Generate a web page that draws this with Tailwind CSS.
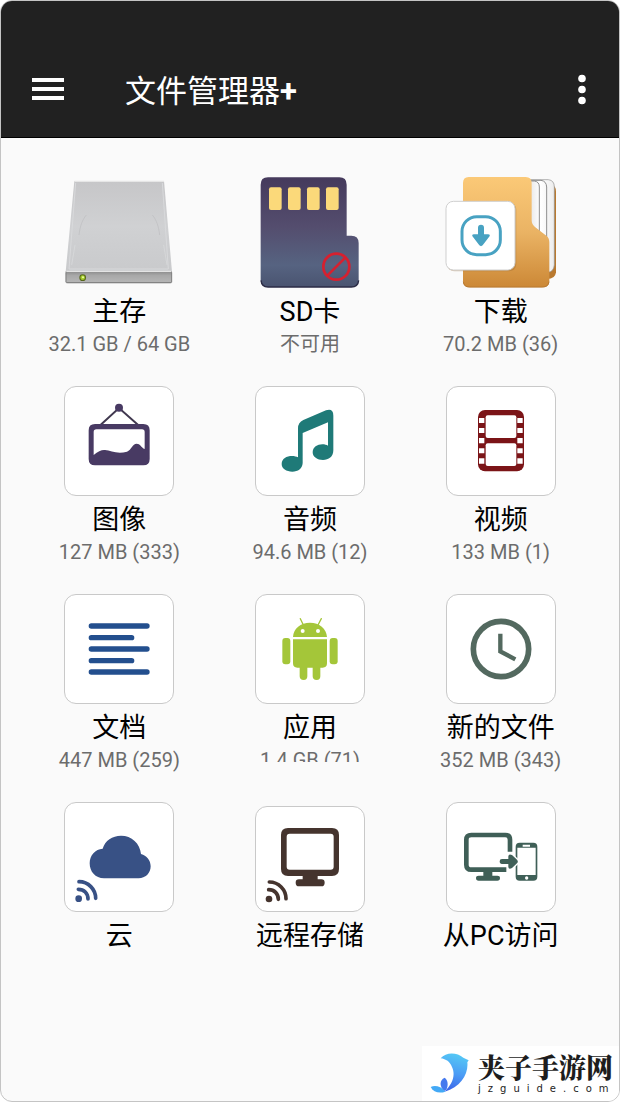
<!DOCTYPE html>
<html lang="zh-CN">
  <head>
    <meta charset="UTF-8" />
    <meta name="viewport" content="width=device-width, initial-scale=1.0" />
    <script src="https://cdn.jsdelivr.net/npm/@tailwindcss/browser@4"></script>
    <title>文件管理器+</title>
  </head>
  <body class="bg-white font-[Roboto,'Noto_Sans_CJK_SC',sans-serif]">
    <div class="relative flex min-h-screen flex-col overflow-hidden rounded-xl border border-[#c4c4c4] bg-[#fafafa]">
      <header class="-mx-px -mt-px flex items-center border-b border-black bg-[#212121] px-8 pt-11 pb-[3px] text-white">
        <button type="button" aria-label="菜单" class="flex h-[90px] items-center">
          <svg class="h-6 w-8" viewBox="0 0 32 24" fill="currentColor">
            <path d="M0 1h32v4H0zM0 10h32v4H0zM0 19h32v4H0z" />
          </svg>
        </button>
        <h1 class="mt-1.5 ml-[61px] text-[31px] leading-10 font-normal">文件管理器<span class="font-bold">+</span></h1>
        <button type="button" aria-label="更多" class="ml-auto flex h-[90px] items-center">
          <svg class="h-8 w-3" viewBox="0 0 12 32" fill="currentColor">
            <circle cx="6" cy="5.5" r="3.8" />
            <circle cx="6" cy="16.5" r="3.8" />
            <circle cx="6" cy="27.5" r="3.8" />
          </svg>
        </button>
      </header>

      <main class="grid grid-cols-3 gap-y-[29px] px-[23px] pt-10">
        <!-- main storage -->
        <button type="button" class="flex flex-col items-center">
          <svg class="size-[110px] overflow-visible" viewBox="73 39 330 330">
            <defs>
              <linearGradient id="diskTop" x1="0" y1="0" x2="0" y2="1">
                <stop offset="0" stop-color="#c6c6c8" />
                <stop offset="0.5" stop-color="#d0d1d3" />
                <stop offset="1" stop-color="#c9cacc" />
              </linearGradient>
              <linearGradient id="diskFront" x1="0" y1="0" x2="0" y2="1">
                <stop offset="0" stop-color="#8c8c8c" />
                <stop offset="0.35" stop-color="#a8a8a8" />
                <stop offset="1" stop-color="#b8b8b8" />
              </linearGradient>
            </defs>
            <path d="M104 48H373L397 320H78Z" fill="url(#diskTop)" />
            <path d="M104 49H373" stroke="#e6e6e6" stroke-width="4" />
            <path d="M108 54L88 312H386L368 54" fill="none" stroke="#d8d9db" stroke-width="3" />
            <path d="M118 210C121 184 128 164 140 150M360 210C357 184 350 164 338 150" fill="none" stroke="#bcbdc0" stroke-width="2" />
            <path d="M96 300L106 240M382 300L372 240" fill="none" stroke="#dbdcde" stroke-width="2" />
            <path d="M78 319H397V350Q397 355 391 355H84Q78 355 78 350Z" fill="url(#diskFront)" />
            <path d="M80 319H395" stroke="#e4e4e4" stroke-width="4" />
            <path d="M80 353H395" stroke="#7a7a7a" stroke-width="3" />
            <path d="M79 322V352M396 322V352" stroke="#808080" stroke-width="3" />
            <circle cx="129" cy="338" r="10" fill="#55651a" />
            <circle cx="129" cy="338" r="7" fill="#a5cc2e" />
            <circle cx="130" cy="337" r="3" fill="#eeffa0" />
          </svg>
          <span class="mt-[5px] text-[27px] leading-[38px] text-black">主存</span>
          <span class="text-[20px] leading-[26px] text-[#6c6c6c]">32.1 GB / 64 GB</span>
        </button>

        <!-- sd card -->
        <button type="button" class="flex flex-col items-center">
          <svg class="size-[110px] overflow-visible" viewBox="75 39 330 330">
            <defs>
              <linearGradient id="sdBody" x1="0" y1="0" x2="0" y2="1">
                <stop offset="0" stop-color="#453a5c" />
                <stop offset="0.45" stop-color="#544d6e" />
                <stop offset="0.8" stop-color="#566381" />
                <stop offset="1" stop-color="#4a5470" />
              </linearGradient>
            </defs>
            <path d="M114 37H328Q350 37 350 59V212H364Q386 212 386 234V344Q386 366 364 366H114Q92 366 92 344V59Q92 37 114 37Z" fill="url(#sdBody)" />
            <path d="M93 346Q95 366 114 366H364Q384 366 386 346" fill="none" stroke="#2b2b45" stroke-width="4" />
            <g fill="#fbd97a">
              <rect x="117" y="67" width="38" height="68" rx="6" />
              <rect x="174" y="67" width="38" height="68" rx="6" />
              <rect x="231" y="67" width="38" height="68" rx="6" />
              <rect x="288" y="67" width="38" height="68" rx="6" />
            </g>
            <g fill="none" stroke="#d6202f" stroke-width="8">
              <circle cx="319" cy="305" r="39" />
              <path d="M292 332L346 278" />
            </g>
          </svg>
          <span class="mt-[5px] text-[27px] leading-[38px] text-black">SD卡</span>
          <span class="text-[20px] leading-[26px] text-[#6c6c6c]">不可用</span>
        </button>

        <!-- downloads -->
        <button type="button" class="flex flex-col items-center">
          <svg class="size-[110px] overflow-visible" viewBox="77 39 330 330">
            <defs>
              <linearGradient id="folder" x1="0" y1="0" x2="0" y2="1">
                <stop offset="0" stop-color="#fbc977" />
                <stop offset="0.5" stop-color="#eab364" />
                <stop offset="1" stop-color="#cc8836" />
              </linearGradient>
              <linearGradient id="sheet" x1="0" y1="0" x2="1" y2="0">
                <stop offset="0" stop-color="#e2e2e2" />
                <stop offset="0.5" stop-color="#ffffff" />
                <stop offset="1" stop-color="#ececec" />
              </linearGradient>
            </defs>
            <path d="M340 60H394Q407 62 407 80V322Q405 342 380 342H340Z" fill="#b9792f" />
            <path d="M320 44H384Q402 46 402 66V300Q400 320 384 322H320Z" fill="url(#sheet)" stroke="#8e8e8e" stroke-width="2" />
            <path d="M330 46H362Q378 48 379 66V230M330 48H342Q357 50 357 66V210" fill="none" stroke="#8e8e8e" stroke-width="3" />
            <path d="M145 36H316Q334 36 334 54V166Q334 178 344 186L378 212Q387 219 387 232V348Q387 367 367 367H147Q128 367 128 348V54Q128 36 145 36Z" fill="url(#folder)" />
            <path d="M129 350Q131 366 147 366H367Q384 366 386 350" fill="none" stroke="#b87a33" stroke-width="3" />
            <rect x="80" y="112" width="208" height="207" rx="22" fill="#9a6a30" opacity="0.35" />
            <rect x="77" y="109" width="207" height="206" rx="22" fill="#fff" stroke="#cfcfcf" stroke-width="3" />
            <rect x="125" y="155" width="115" height="114" rx="44" fill="none" stroke="#48a2c2" stroke-width="9" />
            <path d="M173 188Q173 179 182 179Q191 179 191 188V208H203Q212 209 206 216L187 241Q182 246 177 241L158 216Q152 209 161 208H173Z" fill="#48a2c2" />
          </svg>
          <span class="mt-[5px] text-[27px] leading-[38px] text-black">下载</span>
          <span class="text-[20px] leading-[26px] text-[#6c6c6c]">70.2 MB (36)</span>
        </button>

        <!-- images -->
        <button type="button" class="flex flex-col items-center">
          <span class="size-[110px] rounded-xl border border-[#c9c9c9] bg-white">
            <svg class="size-full" viewBox="76 36 324 324" fill="#483a63">
              <path d="M180 152L238 99L298 152" fill="none" stroke="#40384f" stroke-width="6" />
              <circle cx="238" cy="98" r="12" />
              <path fill-rule="evenodd" d="M166 147H311Q330 147 330 166V252Q330 271 311 271H166Q147 271 147 252V166Q147 147 166 147ZM170 163Q162 163 162 171V240C176 228 186 224 196 225C214 227 232 238 262 230C276 224 278 206 291 206C302 206 304 217 315 222V171Q315 163 307 163Z" />
            </svg>
          </span>
          <span class="mt-[5px] text-[27px] leading-[38px] text-black">图像</span>
          <span class="text-[20px] leading-[26px] text-[#6c6c6c]">127 MB (333)</span>
        </button>

        <!-- audio -->
        <button type="button" class="flex flex-col items-center">
          <span class="size-[110px] rounded-xl border border-[#c9c9c9] bg-white">
            <svg class="size-full" viewBox="76 36 324 324" fill="#1f7a78">
              <path d="M202 160Q202 142 218 135L286 106Q308 99 308 122V226C308 246 294 255 277 255C260 255 246 246 246 232C246 216 260 208 275 208C282 208 288 210 292 212V142L216 174V264C215 281 202 290 185 290C167 290 153 281 153 267C153 251 168 243 184 243C191 243 198 245 202 247Z" />
            </svg>
          </span>
          <span class="mt-[5px] text-[27px] leading-[38px] text-black">音频</span>
          <span class="text-[20px] leading-[26px] text-[#6c6c6c]">94.6 MB (12)</span>
        </button>

        <!-- video -->
        <button type="button" class="flex flex-col items-center">
          <span class="size-[110px] rounded-xl border border-[#c9c9c9] bg-white">
            <svg class="size-full" viewBox="80 36 324 324">
              <rect x="173" y="105" width="138" height="184" rx="21" fill="#7b1417" />
              <g fill="#fff">
                <rect x="196" y="121" width="92" height="68" rx="6" />
                <rect x="196" y="205" width="92" height="68" rx="6" />
                <path d="M176 129H192V144H176zM176 159H192V174H176zM176 189H192V205H176zM176 220H192V235H176zM176 250H192V266H176z" />
                <path d="M291 129H307V144H291zM291 159H307V174H291zM291 189H307V205H291zM291 220H307V235H291zM291 250H307V266H291z" />
              </g>
            </svg>
          </span>
          <span class="mt-[5px] text-[27px] leading-[38px] text-black">视频</span>
          <span class="text-[20px] leading-[26px] text-[#6c6c6c]">133 MB (1)</span>
        </button>

        <!-- documents -->
        <button type="button" class="flex flex-col items-center">
          <span class="size-[110px] rounded-xl border border-[#c9c9c9] bg-white">
            <svg class="size-full" viewBox="76 30 324 324">
              <path d="M155 123H322M155 158H276M155 192H322M155 227H276M155 261H322" stroke="#234f8e" stroke-width="16" stroke-linecap="round" />
            </svg>
          </span>
          <span class="mt-[5px] text-[27px] leading-[38px] text-black">文档</span>
          <span class="text-[20px] leading-[26px] text-[#6c6c6c]">447 MB (259)</span>
        </button>

        <!-- apps -->
        <button type="button" class="flex flex-col items-center">
          <span class="size-[110px] rounded-xl border border-[#c9c9c9] bg-white">
            <svg class="size-full" viewBox="648 30 324 324" fill="#a4c639">
              <path d="M781 101L790 120M844 101L834 120" stroke="#a4c639" stroke-width="4" stroke-linecap="round" />
              <path d="M759 156C760 130 782 113 810 113C838 113 859 130 861 156Z" />
              <circle cx="788" cy="138" r="6" fill="#fff" />
              <circle cx="834" cy="138" r="6" fill="#fff" />
              <path d="M759 163H861V235Q861 248 848 248H841V274Q841 285 830 285Q818 285 818 274V248H802V274Q802 285 791 285Q779 285 779 274V248H772Q759 248 759 235Z" />
              <rect x="727" y="159" width="24" height="79" rx="9" />
              <rect x="869" y="159" width="24" height="79" rx="9" />
            </svg>
          </span>
          <span class="mt-[5px] text-[27px] leading-[38px] text-black">应用</span>
          <span class="h-[15px] overflow-hidden text-[20px] leading-[26px] text-[#6c6c6c]">1.4 GB (71)</span>
        </button>

        <!-- new files -->
        <button type="button" class="flex flex-col items-center">
          <span class="size-[110px] rounded-xl border border-[#c9c9c9] bg-white">
            <svg class="size-full" viewBox="80 30 324 324" fill="none" stroke="#53695f">
              <circle cx="242" cy="192" r="83" stroke-width="17" />
              <path d="M240 146V199L285 223" stroke-width="13" />
            </svg>
          </span>
          <span class="mt-[5px] text-[27px] leading-[38px] text-black">新的文件</span>
          <span class="text-[20px] leading-[26px] text-[#6c6c6c]">352 MB (343)</span>
        </button>

        <!-- cloud -->
        <button type="button" class="flex flex-col items-center">
          <span class="size-[110px] rounded-xl border border-[#c9c9c9] bg-white">
            <svg class="size-full" viewBox="73 40 324 324" fill="#385185">
              <path d="M190 266C164 266 147 246 147 221C147 197 164 178 186 177C193 153 215 138 241 138C273 138 298 161 301 193C318 198 330 212 330 230C330 251 314 266 294 266Z" />
              <circle cx="114" cy="327" r="10" />
              <path d="M113 299C130 299 142 311 142 328M115 276C143 276 165 299 165 326" fill="none" stroke="#385185" stroke-width="11" stroke-linecap="round" />
            </svg>
          </span>
          <span class="mt-[5px] text-[27px] leading-[38px] text-black">云</span>
        </button>

        <!-- remote storage -->
        <button type="button" class="flex flex-col items-center pt-1">
          <span class="h-[106px] w-[110px] rounded-xl border border-[#c9c9c9] bg-white">
            <svg class="size-full" viewBox="648 51 324 312" fill="#45342e">
              <path fill-rule="evenodd" d="M744 114H876Q897 114 897 135V237Q897 258 876 258H833V268H844Q854 268 854 278Q854 289 844 289H777Q767 289 767 278Q767 268 777 268H788V258H744Q723 258 723 237V135Q723 114 744 114ZM749 131Q740 131 740 140V230Q740 239 749 239H872Q881 239 881 230V140Q881 131 872 131Z" />
              <circle cx="687" cy="327" r="10" />
              <path d="M686 299C703 299 715 311 715 328M688 276C716 276 738 299 738 326" fill="none" stroke="#45342e" stroke-width="11" stroke-linecap="round" />
            </svg>
          </span>
          <span class="mt-[5px] text-[27px] leading-[38px] text-black">远程存储</span>
        </button>

        <!-- access from pc -->
        <button type="button" class="flex flex-col items-center">
          <span class="size-[110px] rounded-xl border border-[#c9c9c9] bg-white">
            <svg class="size-full" viewBox="81 40 324 324" fill="#3f5f57">
              <path d="M270 186V150Q270 136 256 136H154Q139 136 139 150V225Q139 240 154 240H259" fill="none" stroke="#3f5f57" stroke-width="14" />
              <path d="M190 244H217V258H232Q240 258 240 265Q240 273 232 273H176Q168 273 168 265Q168 258 176 258H190Z" />
              <path fill-rule="evenodd" d="M299 159H340Q352 159 352 171V261Q352 273 340 273H299Q287 273 287 261V171Q287 159 299 159ZM292 174V256H347V174ZM308 165V171H330V165ZM320 260A5 5 0 1 0 320 270A5 5 0 1 0 320 260Z" />
              <path d="M246 208H265V200Q266 191 276 196L291 210Q296 216 291 221L276 235Q266 241 265 232V223H246Q239 223 239 215Q239 208 246 208Z" stroke="#fff" stroke-width="8" paint-order="stroke" />
            </svg>
          </span>
          <span class="mt-[5px] text-[27px] leading-[38px] text-black">从PC访问</span>
        </button>
      </main>

      <!-- site mark in the corner -->
      <div class="absolute -right-px -bottom-px flex h-14 w-[198px] items-center gap-2 bg-white pb-0.5 pl-2">
        <svg class="h-10 w-10 shrink-0" viewBox="0 0 120 120">
          <defs>
            <linearGradient id="dolphin" x1="0.5" y1="0" x2="0.3" y2="1">
              <stop offset="0" stop-color="#55c8f5" />
              <stop offset="0.5" stop-color="#4b9cf5" />
              <stop offset="1" stop-color="#3b62e8" />
            </linearGradient>
          </defs>
          <path d="M32 16C48 -4 82 -2 100 14L116 22L112 28C116 62 92 104 44 116C66 94 78 68 66 42C60 26 48 18 32 16Z" fill="url(#dolphin)" />
          <path d="M42 114C28 98 28 82 44 74C54 80 56 98 48 112Z" fill="#4579ee" />
          <path d="M2 102C16 96 32 100 46 116C28 122 10 118 2 102Z" fill="#43a9f6" />
        </svg>
        <div class="flex flex-col whitespace-nowrap text-[#1d1d1d]">
          <span class="font-['Noto_Serif_CJK_SC','Noto_Sans_CJK_SC',serif] text-[27px] leading-8 font-black">夹子手游网</span>
          <span class="font-['DejaVu_Sans',sans-serif] text-[10px] leading-3 tracking-[7px]">jzguide.com</span>
        </div>
      </div>
    </div>
  </body>
</html>
